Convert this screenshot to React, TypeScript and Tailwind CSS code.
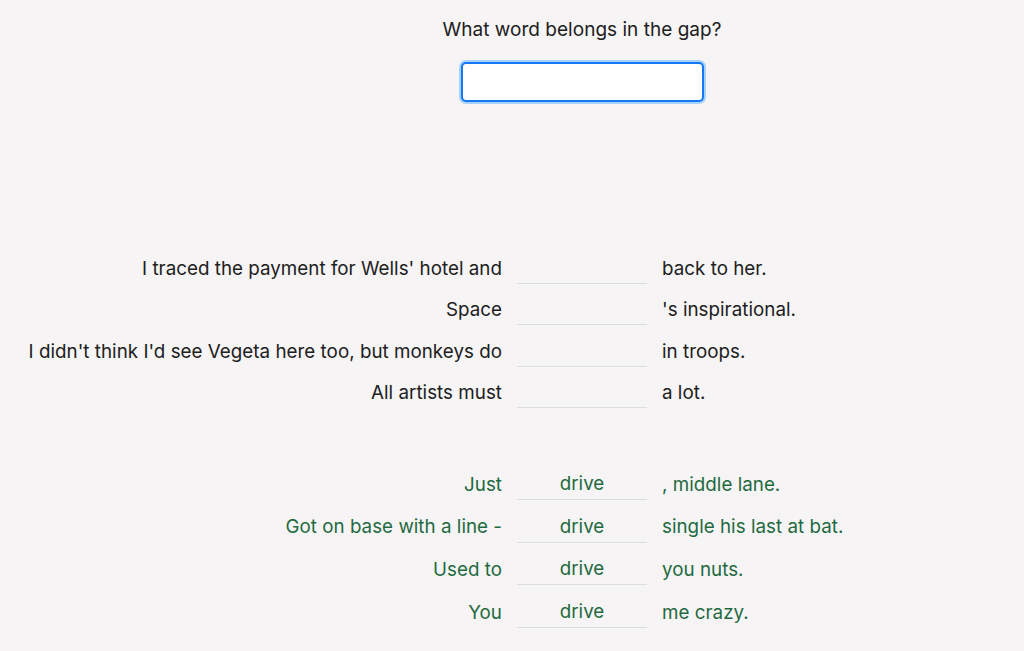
import React from "react";

const top = [
  ["I traced the payment for Wells' hotel and", "", "back to her."],
  ["Space", "", "'s inspirational."],
  ["I didn't think I'd see Vegeta here too, but monkeys do", "", "in troops."],
  ["All artists must", "", "a lot."],
];

const bottom = [
  ["Just", "drive", ", middle lane."],
  ["Got on base with a line -", "drive", "single his last at bat."],
  ["Used to", "drive", "you nuts."],
  ["You", "drive", "me crazy."],
];

function Rows({ rows, green }: { rows: string[][]; green?: boolean }) {
  return (
    <div
      className={
        "grid w-[1164px] grid-cols-[1fr_130px_1fr] gap-x-[15px] items-center " +
        (green ? "gap-y-[12.7px] text-[#1f6a40]" : "gap-y-[11.3px] text-[#202020]")
      }
    >
      {rows.map((r, i) => (
        <React.Fragment key={i}>
          <div className="text-right whitespace-nowrap">{r[0]}</div>
          <div className="h-[30px] border-b border-[#d9dfe2] text-center leading-[28px]">{r[1]}</div>
          <div className="whitespace-nowrap">{r[2]}</div>
        </React.Fragment>
      ))}
    </div>
  );
}

export default function App() {
  return (
    <div
      className="min-h-[651px] w-full overflow-hidden bg-[#f6f4f5] text-[18.8px] tracking-[0.02px] text-[#202020]"
      style={{ fontFamily: "Inter, 'Liberation Sans', sans-serif" }}
    >
      <div className="flex w-[1164px] flex-col items-center pt-[17px]">
        <div className="text-[19px] leading-[26px]">What word belongs in the gap?</div>
        <div className="mt-[19px] h-[40px] w-[243px] rounded-[5px] border-2 border-[#1677f5] bg-white shadow-[0_0_0_2px_#a7d3fa]" />
      </div>
      <div className="mt-[152px]">
        <Rows rows={top} />
      </div>
      <div className="mt-[62px]">
        <Rows rows={bottom} green />
      </div>
    </div>
  );
}
